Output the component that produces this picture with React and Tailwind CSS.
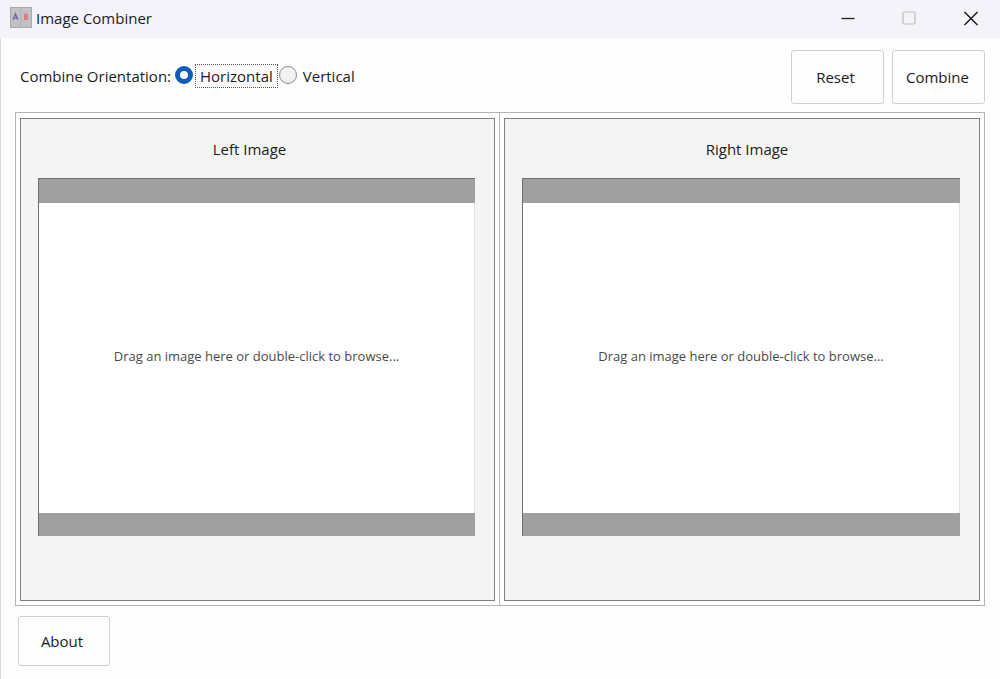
import { useState } from "react";

function AppIcon() {
  return (
    <svg className="h-[22px] w-[22px] shrink-0" viewBox="0 0 22 22" aria-hidden="true">
      <rect x="0.5" y="0.5" width="21" height="20" fill="#c2c2c4" stroke="#a9a9ab" />
      <path d="M11 1v19" stroke="#b0b0b3" />
      <path d="M3.2 12.8 5.5 6.8 7.8 12.8M4 10.8h3" fill="none" stroke="#6a62b4" strokeWidth="1.3" />
      <path d="M14.6 7.2h1.6a1.2 1.2 0 0 1 0 2.6h-1.6V7.2v5.2h1.8a1.3 1.3 0 0 0 0-2.6" fill="#e08a9c" stroke="#dc7088" strokeWidth="1.2" />
    </svg>
  );
}

function TitleBar() {
  return (
    <header className="flex h-[38px] items-center justify-between bg-[#f3f3f9] pl-2.5">
      <div className="flex items-center gap-1 pb-0.5">
        <AppIcon />
        <h1 className="text-[15px] leading-5">Image Combiner</h1>
      </div>
      <div className="flex h-full items-center pb-0.5">
        <button type="button" aria-label="Minimize" className="flex h-full w-[60px] items-center justify-center">
          <svg className="h-4 w-4" viewBox="0 0 16 16" aria-hidden="true">
            <path d="M1.5 8.5h13" stroke="#1f1f24" strokeWidth="1.3" />
          </svg>
        </button>
        <button type="button" aria-label="Maximize" disabled className="flex h-full w-[62px] items-center justify-center">
          <svg className="h-4 w-4" viewBox="0 0 16 16" aria-hidden="true">
            <rect x="2" y="2" width="12" height="12" rx="1.2" fill="none" stroke="#bdbdc2" strokeWidth="1.2" />
          </svg>
        </button>
        <button type="button" aria-label="Close" className="flex h-full w-[60px] items-center justify-center pl-0.5">
          <svg className="h-4 w-4" viewBox="0 0 16 16" aria-hidden="true">
            <path d="M1.5 2 14.5 15M14.5 2 1.5 15" stroke="#1a1a1e" strokeWidth="1.5" />
          </svg>
        </button>
      </div>
    </header>
  );
}

const radioClass =
  "mb-0.5 h-[18px] w-[18px] shrink-0 appearance-none rounded-full border border-[#8c8c8c] bg-[#f3f3f3] checked:border-[5px] checked:border-[#0f5cb8] checked:bg-white";

function Orientation({ value, onChange }) {
  return (
    <fieldset className="flex items-center">
      <legend className="float-left mr-1">Combine Orientation:</legend>
      <input id="horizontal" type="radio" name="orientation" className={radioClass}
        checked={value === "horizontal"} onChange={() => onChange("horizontal")} />
      <label htmlFor="horizontal" className="ml-0.5 mr-px border border-dotted border-[#555] px-1">Horizontal</label>
      <input id="vertical" type="radio" name="orientation" className={radioClass}
        checked={value === "vertical"} onChange={() => onChange("vertical")} />
      <label htmlFor="vertical" className="ml-1.5">Vertical</label>
    </fieldset>
  );
}

function PushButton({ className, children }) {
  return (
    <button type="button" className={`rounded-[3px] border border-[#d0d0d0] bg-[#fdfdfd] ${className}`}>
      {children}
    </button>
  );
}

function ImagePanel({ title, titleClass, cellClass }) {
  return (
    <div className={`flex w-1/2 px-1 pb-1 pt-[5px] ${cellClass}`}>
      <section className="flex flex-1 flex-col border border-[#808080] bg-[#f4f4f4] pb-16 pl-[17px] pr-[19px] pt-5">
        <h2 className={`leading-5 ${titleClass} text-center`}>{title}</h2>
        <button type="button" className="mt-[19px] flex flex-1 flex-col border-l border-t border-[#6e6e6e] bg-white">
          <span className="h-6 w-full bg-[#a0a0a0]" />
          <span className="flex w-full flex-1 items-center justify-center border-r border-[#e2e2e2] pb-1 text-[13px] text-[#4a4a4a]">
            Drag an image here or double-click to browse...
          </span>
          <span className="h-[23px] w-full bg-[#a0a0a0]" />
        </button>
      </section>
    </div>
  );
}

export default function App() {
  const [orientation, setOrientation] = useState("horizontal");
  return (
    <div className="flex min-h-screen flex-col bg-[#fefefe] font-['Open_Sans','Noto_Sans',sans-serif] text-[15px] leading-[22px] text-[#1c1c1c]">
      <TitleBar />
      <main className="flex flex-1 flex-col border-l border-[#d9d9db] pb-[13px] pl-[14px] pr-[15px] pt-3">
        <div className="flex items-start justify-between pl-[5px]">
          <div className="pt-3.5">
            <Orientation value={orientation} onChange={setOrientation} />
          </div>
          <div className="flex gap-2">
            <PushButton className="h-[54px] w-[93px] pr-1">Reset</PushButton>
            <PushButton className="h-[54px] w-[93px] pr-0.5">Combine</PushButton>
          </div>
        </div>
        <div className="mt-2 flex flex-1 border border-[#b4b4b4]">
          <ImagePanel title="Left Image" titleClass="pr-3.5" cellClass="border-r border-[#b4b4b4]" />
          <ImagePanel title="Right Image" titleClass="pl-3" cellClass="" />
        </div>
        <div className="mt-2.5 pl-[3px]">
          <PushButton className="block h-[50px] w-[92px] pr-1">About</PushButton>
        </div>
      </main>
    </div>
  );
}
